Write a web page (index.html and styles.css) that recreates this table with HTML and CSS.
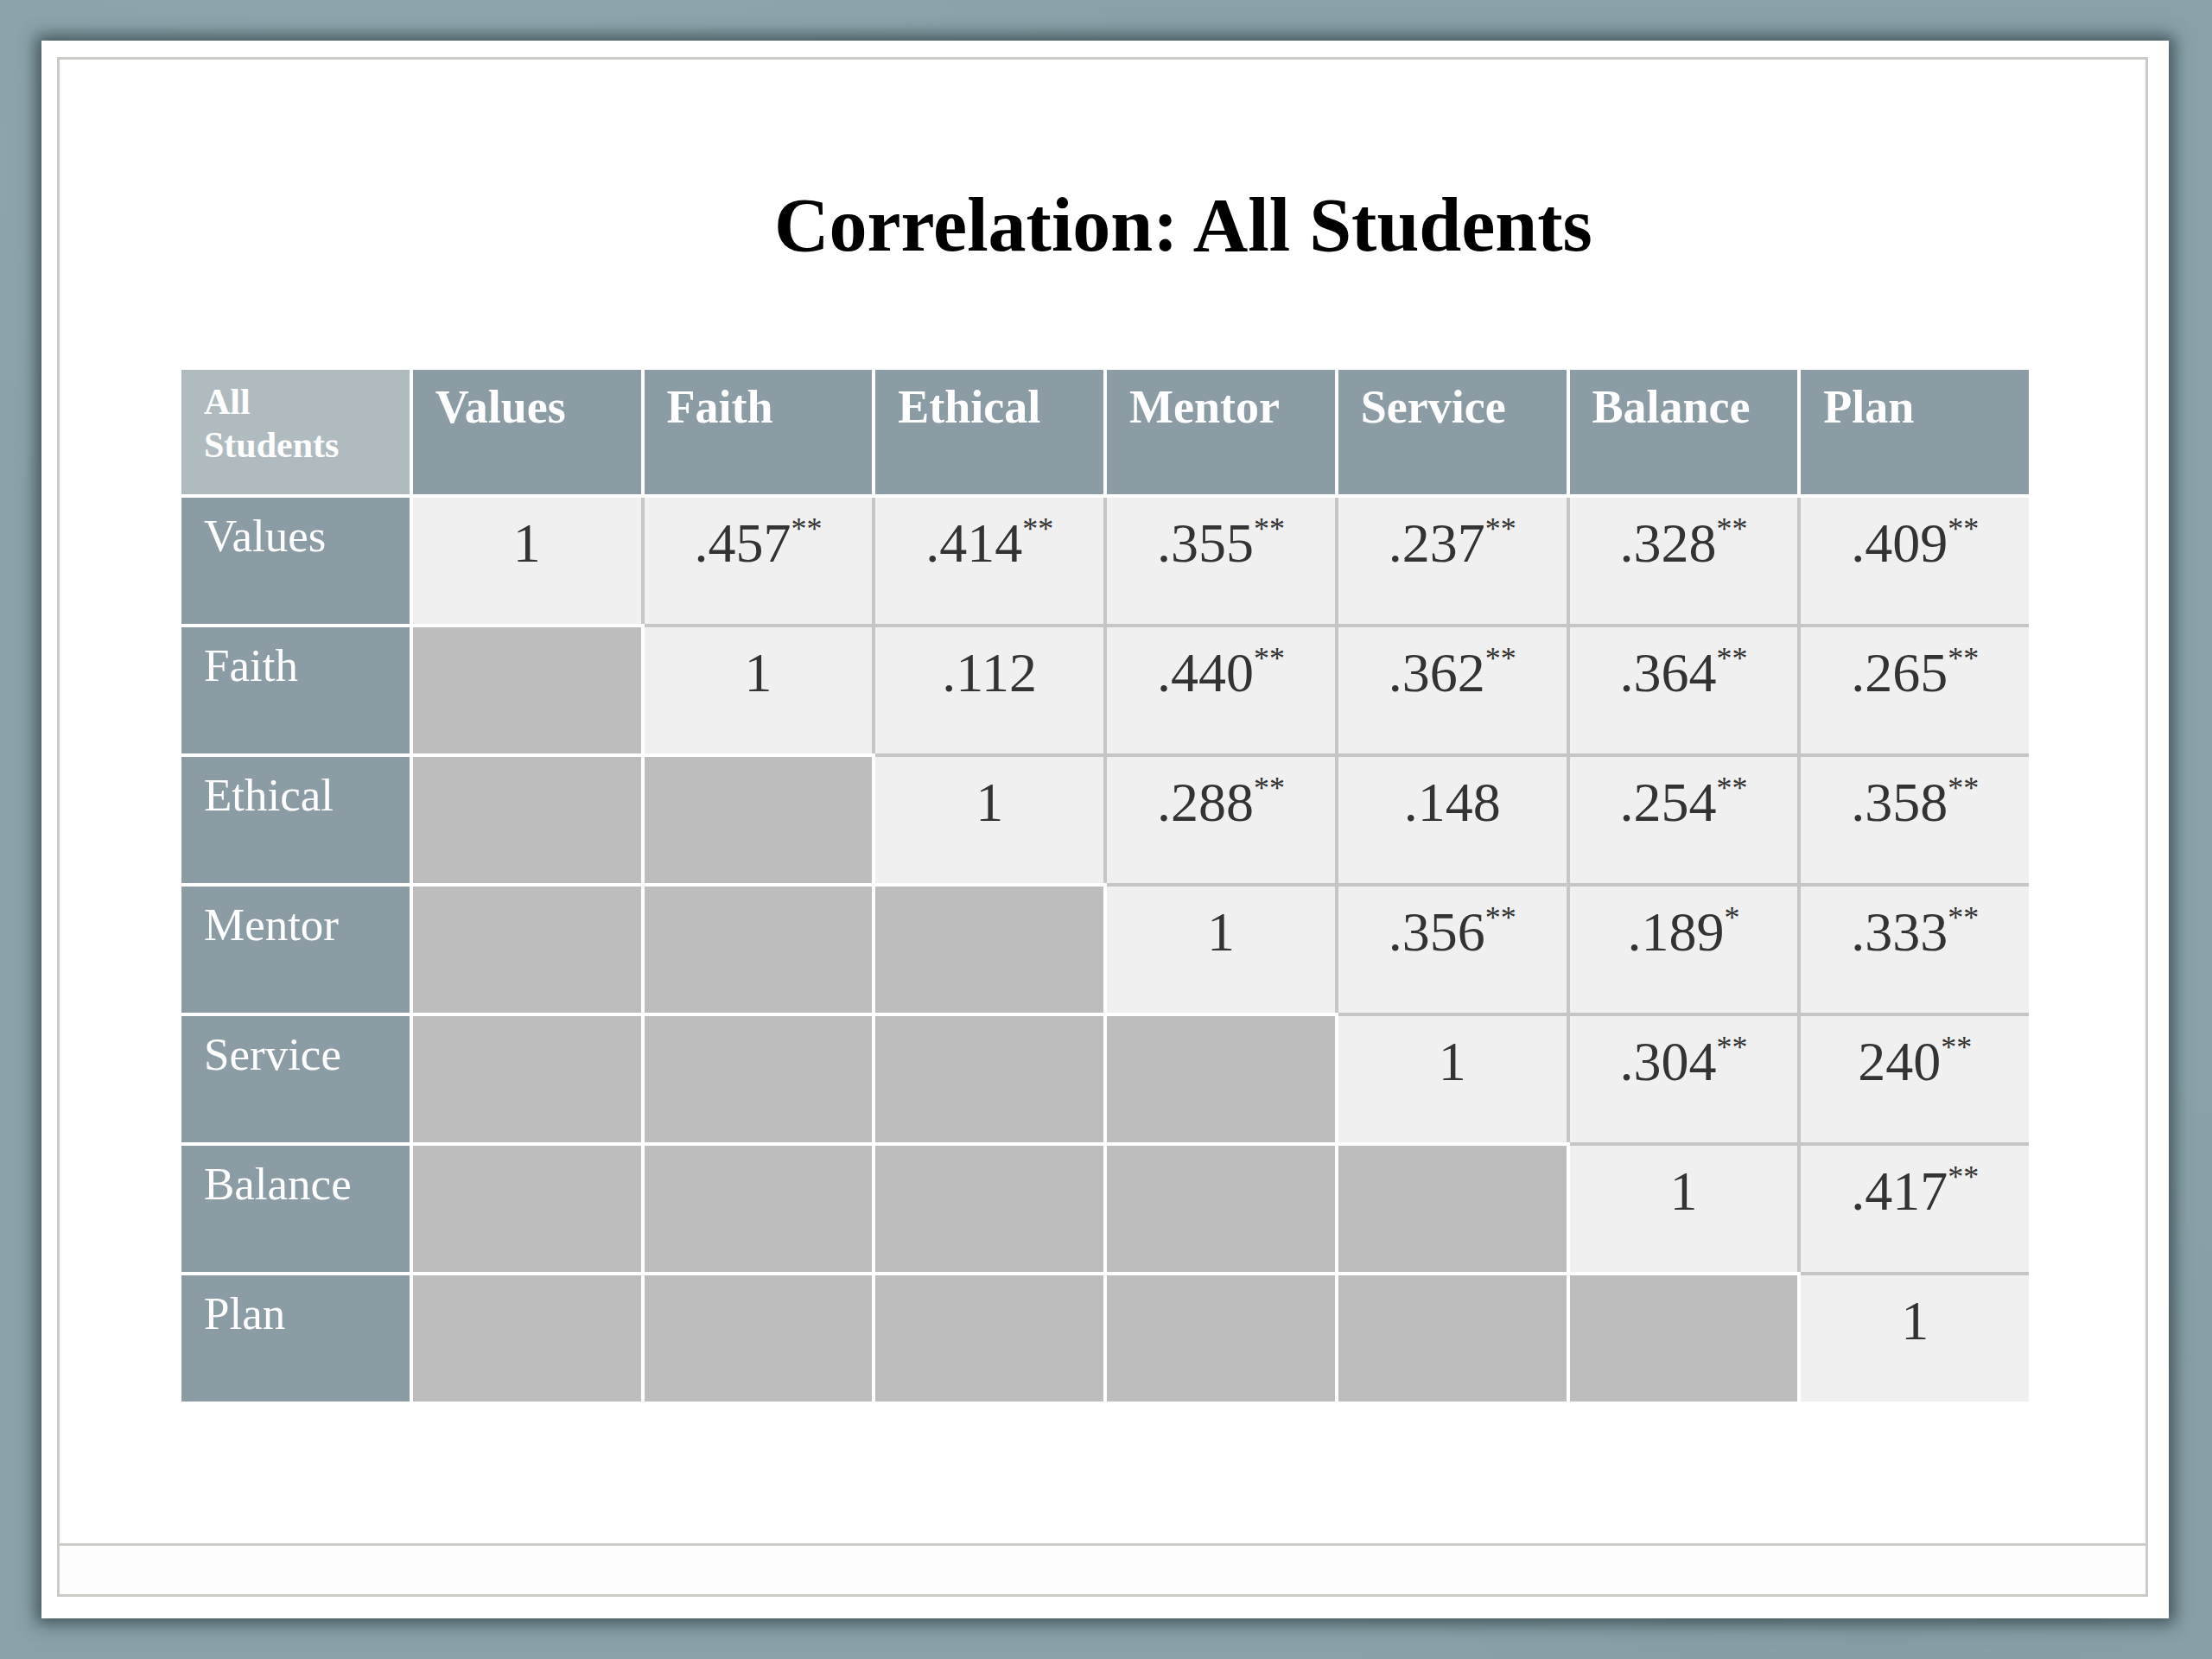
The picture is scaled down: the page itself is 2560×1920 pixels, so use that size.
FILE: index.html
```html
<!DOCTYPE html>
<html lang="en">
<head>
<meta charset="utf-8">
<title>Correlation: All Students</title>
<link rel="stylesheet" href="styles.css">
</head>
<body>
<div class="slide">
  <div class="frame">
    <div class="content">
      <h1 class="title">Correlation: All Students</h1>
      <div class="grid">
        <div class="corner">All<br>Students</div>
        <div class="hd">Values</div>
        <div class="hd">Faith</div>
        <div class="hd">Ethical</div>
        <div class="hd">Mentor</div>
        <div class="hd">Service</div>
        <div class="hd">Balance</div>
        <div class="hd">Plan</div>

        <div class="lb">Values</div>
        <div class="d">1</div>
        <div class="d sl">.457<span class="s">**</span></div>
        <div class="d sl">.414<span class="s">**</span></div>
        <div class="d sl">.355<span class="s">**</span></div>
        <div class="d sl">.237<span class="s">**</span></div>
        <div class="d sl">.328<span class="s">**</span></div>
        <div class="d sl">.409<span class="s">**</span></div>

        <div class="lb">Faith</div>
        <div class="g"></div>
        <div class="d st">1</div>
        <div class="d slt">.112</div>
        <div class="d slt">.440<span class="s">**</span></div>
        <div class="d slt">.362<span class="s">**</span></div>
        <div class="d slt">.364<span class="s">**</span></div>
        <div class="d slt">.265<span class="s">**</span></div>

        <div class="lb">Ethical</div>
        <div class="g"></div>
        <div class="g"></div>
        <div class="d st">1</div>
        <div class="d slt">.288<span class="s">**</span></div>
        <div class="d slt">.148</div>
        <div class="d slt">.254<span class="s">**</span></div>
        <div class="d slt">.358<span class="s">**</span></div>

        <div class="lb">Mentor</div>
        <div class="g"></div>
        <div class="g"></div>
        <div class="g"></div>
        <div class="d st">1</div>
        <div class="d slt">.356<span class="s">**</span></div>
        <div class="d slt">.189<span class="s">*</span></div>
        <div class="d slt">.333<span class="s">**</span></div>

        <div class="lb">Service</div>
        <div class="g"></div>
        <div class="g"></div>
        <div class="g"></div>
        <div class="g"></div>
        <div class="d st">1</div>
        <div class="d slt">.304<span class="s">**</span></div>
        <div class="d slt">240<span class="s">**</span></div>

        <div class="lb">Balance</div>
        <div class="g"></div>
        <div class="g"></div>
        <div class="g"></div>
        <div class="g"></div>
        <div class="g"></div>
        <div class="d st">1</div>
        <div class="d slt">.417<span class="s">**</span></div>

        <div class="lb">Plan</div>
        <div class="g"></div>
        <div class="g"></div>
        <div class="g"></div>
        <div class="g"></div>
        <div class="g"></div>
        <div class="g"></div>
        <div class="d st">1</div>
      </div>
    </div>
    <div class="footer"></div>
  </div>
</div>
</body>
</html>
```

FILE: styles.css
```css
html, body {
  margin: 0;
  padding: 0;
}

body {
  width: 2560px;
  height: 1920px;
  box-sizing: border-box;
  padding: 47px 50px 47px 48px;
  background-color: #89a2aa;
  background-image:
    radial-gradient(ellipse 900px 500px at 20% 10%, rgba(255,255,255,0.05), transparent),
    radial-gradient(ellipse 700px 600px at 85% 90%, rgba(0,0,0,0.04), transparent);
  font-family: "Liberation Serif", "Times New Roman", serif;
  overflow: hidden;
}

.slide {
  width: 2462px;
  height: 1826px;
  box-sizing: border-box;
  background: #ffffff;
  padding: 19px 24px 25px 18px;
  box-shadow: 0 0 18px 6px rgba(40, 55, 60, 0.75);
  display: flex;
}

.frame {
  flex: 1;
  border: 3px solid #cbcbc7;
  display: flex;
  flex-direction: column;
}

.content {
  flex: 1;
  padding-left: 141px;
}

.title {
  margin: 148px 0 0 686px;
  font-size: 88px;
  line-height: 87px;
  font-weight: bold;
  color: #000;
  white-space: nowrap;
}

.grid {
  margin-top: 124px;
  width: 2138px;
  display: grid;
  grid-template-columns: repeat(8, 1fr);
  grid-template-rows: 144px repeat(7, 146px);
  gap: 4px;
}

.corner {
  background: #b0bbc0;
  color: #fff;
  font-weight: bold;
  font-size: 42px;
  line-height: 50px;
  padding: 12px 0 0 26px;
}

.hd {
  background: #8b9ca4;
  color: #fff;
  font-weight: bold;
  font-size: 54px;
  line-height: 62px;
  padding: 12px 0 0 26px;
}

.lb {
  background: #8b9ca4;
  color: #fff;
  font-size: 53px;
  line-height: 61px;
  padding: 14px 0 0 26px;
}

.g {
  background: #bdbdbd;
}

.d {
  background: #f0f0f0;
  color: #333;
  font-size: 64px;
  line-height: 74px;
  padding-top: 16px;
  text-align: center;
}

.sl {
  box-shadow: -4px 0 0 #c6c6c6;
}

.st {
  box-shadow: 0 -4px 0 #c6c6c6;
}

.slt {
  box-shadow: -4px 0 0 #c6c6c6, 0 -4px 0 #c6c6c6, -4px -4px 0 #c6c6c6;
}

.s {
  font-size: 36px;
  line-height: 0;
  vertical-align: 0.72em;
}

.footer {
  height: 56px;
  border-top: 3px solid #cbcbc7;
  background: #fdfdfd;
}
```
